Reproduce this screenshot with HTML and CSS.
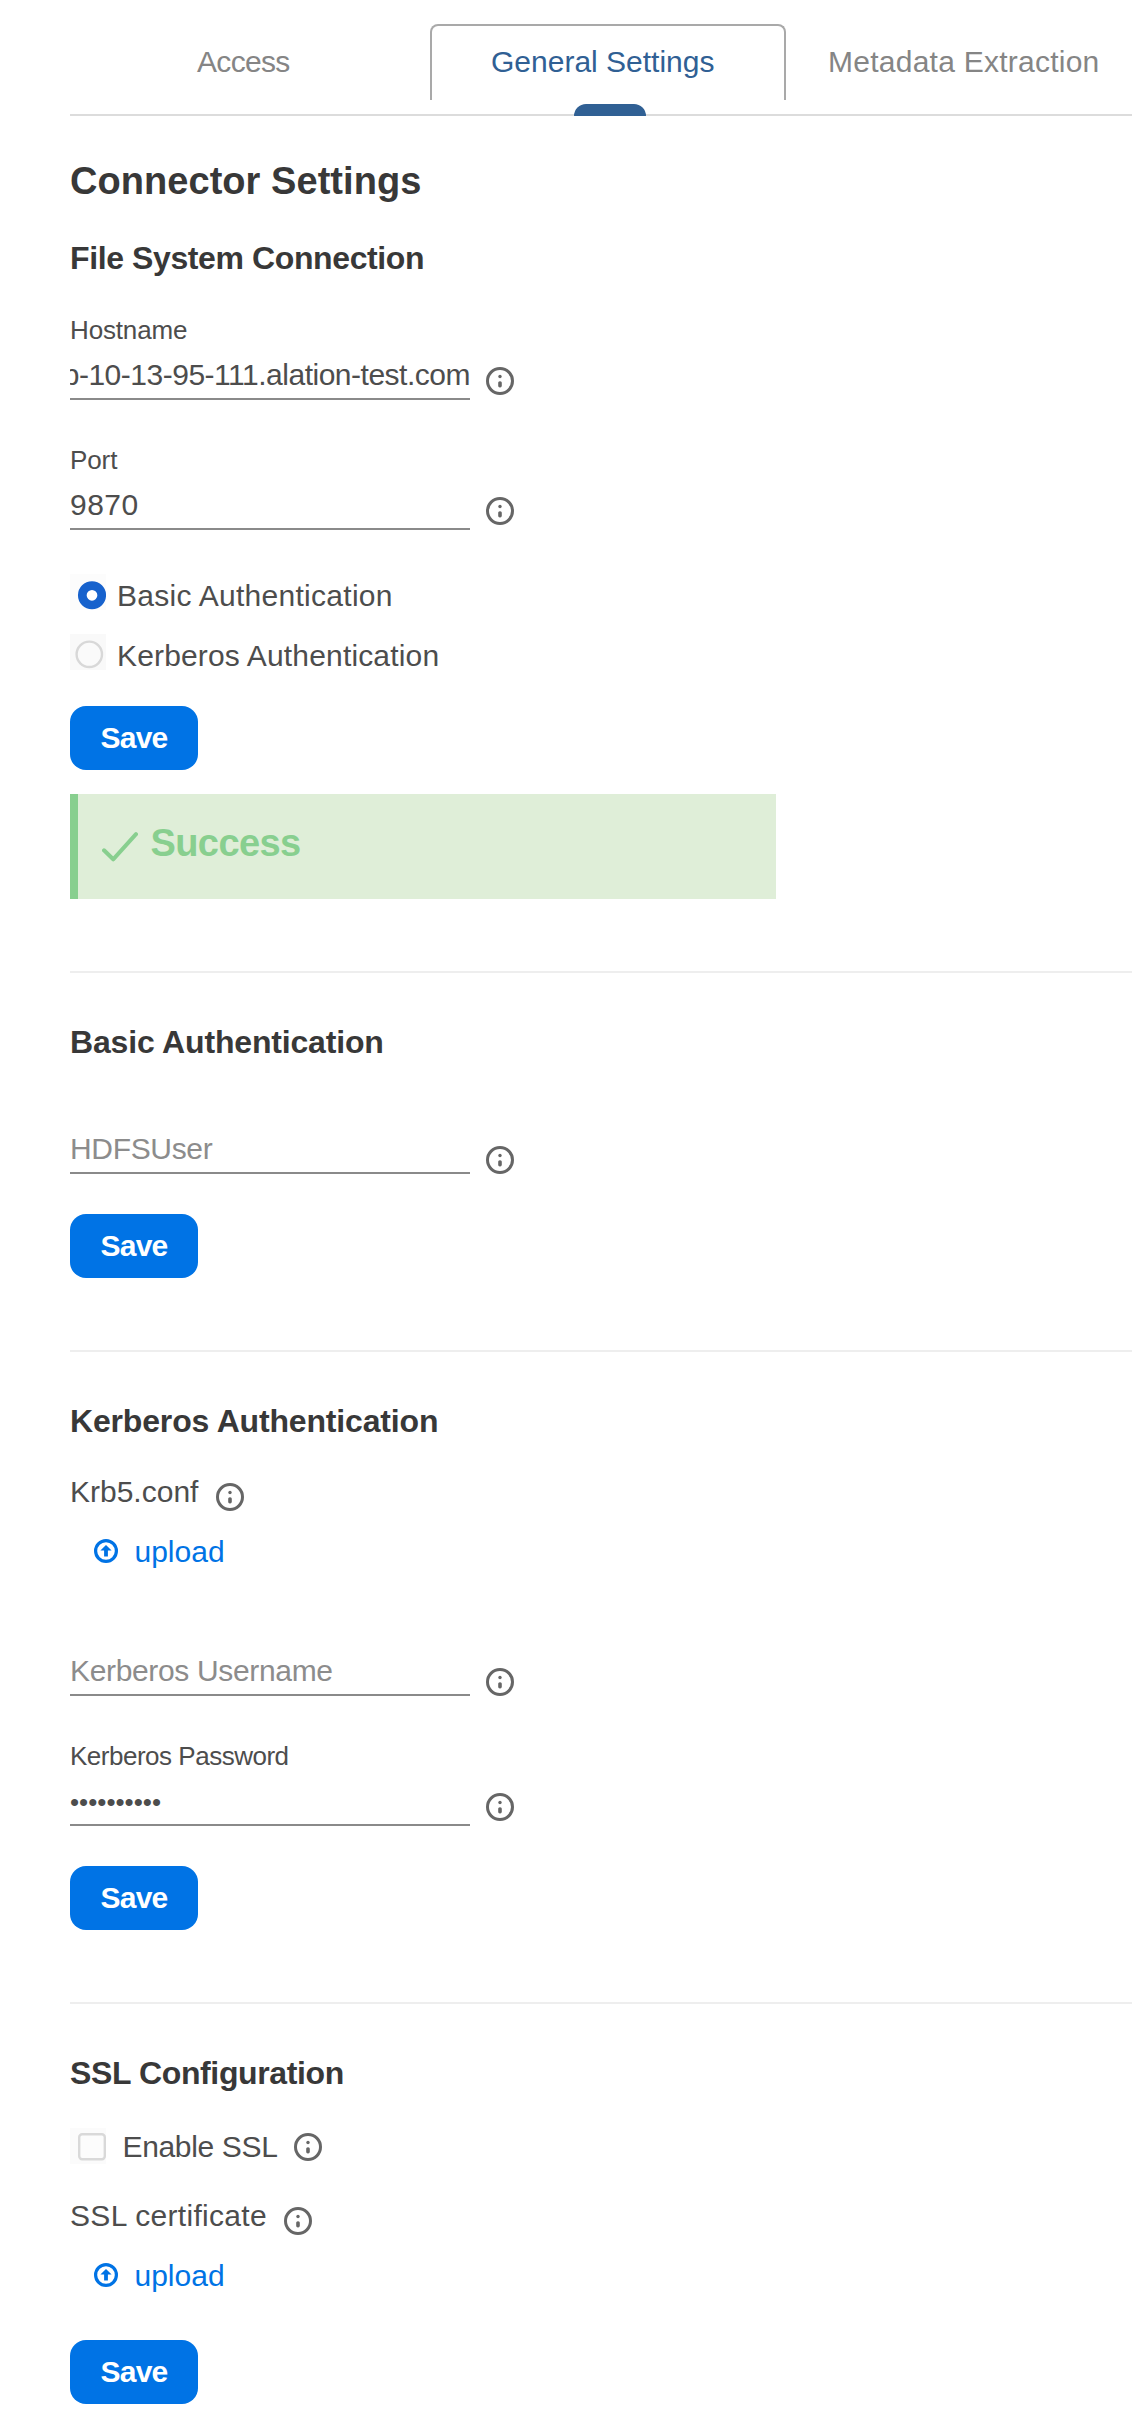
FILE: index.html
```html
<!DOCTYPE html>
<html lang="en">
<head>
<meta charset="utf-8">
<title>General Settings</title>
<link rel="stylesheet" href="styles.css">
</head>
<body>
<svg class="sprite" aria-hidden="true">
  <symbol id="info" viewBox="0 0 28 28">
    <circle cx="14" cy="14" r="12.5" fill="none" stroke="#666" stroke-width="3"/>
    <circle cx="14" cy="9.5" r="1.7" fill="#666"/>
    <rect x="12.2" y="14.2" width="3.6" height="6.2" rx="1.6" fill="#666"/>
  </symbol>
  <symbol id="upload" viewBox="0 0 24 24">
    <circle cx="12" cy="12" r="10.4" fill="none" stroke="#0073e5" stroke-width="3.2"/>
    <path d="M12 6l5.600 5.600h-3.700v6h-3.800v-6H6.400z" fill="#0073e5"/>
  </symbol>
</svg>

<nav class="tabs">
  <a class="tab tab-access">Access</a>
  <a class="tab tab-active">General Settings</a>
  <a class="tab tab-meta">Metadata Extraction</a>
</nav>

<main class="content">
  <h1 class="title">Connector Settings</h1>

  <section class="group">
    <h2 class="heading heading-files">File System Connection</h2>
    <div class="label label-host">Hostname</div>
    <div class="field">
      <div class="input input-host"><span>p-10-13-95-111.alation-test.com</span></div>
      <svg class="icon icon-raised"><use href="#info"/></svg>
    </div>
    <div class="label label-port">Port</div>
    <div class="field">
      <div class="input input-port">9870</div>
      <svg class="icon icon-raised"><use href="#info"/></svg>
    </div>
    <div class="radios">
      <label class="radio">
        <svg class="mark" viewBox="0 0 36 36"><rect width="36" height="36" fill="#fcfcfc"/><circle cx="22" cy="21.300" r="9.700" fill="#fff" stroke="#1762cd" stroke-width="8.700"/></svg>
        <span class="radio-basic">Basic Authentication</span>
      </label>
      <label class="radio">
        <svg class="mark" viewBox="0 0 36 36"><rect width="36" height="36" fill="#f9f9f9"/><circle cx="19.300" cy="20.300" r="12.700" fill="#fafafa" stroke="#d8d8d8" stroke-width="2.400"/></svg>
        <span class="radio-kerberos">Kerberos Authentication</span>
      </label>
    </div>
    <button class="save">Save</button>
    <div class="alert">
      <svg class="check" viewBox="0 0 36 30"><path d="M2 18.300l9.200 9L34 2.200" fill="none" stroke="#88cf8f" stroke-width="4" stroke-linecap="round" stroke-linejoin="round"/></svg>
      <span>Success</span>
    </div>
  </section>

  <section class="group divided">
    <h2 class="heading">Basic Authentication</h2>
    <div class="field field-user">
      <div class="input placeholder">HDFSUser</div>
      <svg class="icon"><use href="#info"/></svg>
    </div>
    <button class="save save-far">Save</button>
  </section>

  <section class="group divided">
    <h2 class="heading">Kerberos Authentication</h2>
    <div class="file file-krb">
      <span>Krb5.conf</span>
      <svg class="icon"><use href="#info"/></svg>
    </div>
    <a class="upload"><svg class="upload-icon"><use href="#upload"/></svg><span>upload</span></a>
    <div class="field field-kerberos">
      <div class="input placeholder">Kerberos Username</div>
      <svg class="icon"><use href="#info"/></svg>
    </div>
    <div class="label label-password">Kerberos Password</div>
    <div class="field">
      <div class="input password">••••••••••</div>
      <svg class="icon icon-raised"><use href="#info"/></svg>
    </div>
    <button class="save save-far">Save</button>
  </section>

  <section class="group divided">
    <h2 class="heading heading-ssl">SSL Configuration</h2>
    <label class="checkbox">
      <svg class="mark" viewBox="0 0 36 36"><rect width="36" height="36" fill="#fbfbfb"/><rect x="9.200" y="6.200" width="25.600" height="25" rx="3" fill="#fcfcfc" stroke="#d9d9d9" stroke-width="2.400"/></svg>
      <span>Enable SSL</span>
      <svg class="icon"><use href="#info"/></svg>
    </label>
    <div class="file file-ssl">
      <span>SSL certificate</span>
      <svg class="icon"><use href="#info"/></svg>
    </div>
    <a class="upload"><svg class="upload-icon"><use href="#upload"/></svg><span>upload</span></a>
    <button class="save save-ssl">Save</button>
  </section>
</main>
</body>
</html>
```
FILE: styles.css
```css
* { box-sizing: border-box; }

body {
  margin: 0;
  background: #fff;
  color: #4d4d4d;
  font: 30px/33px "Liberation Sans", Arial, sans-serif;
}

.sprite { display: none; }

/* Tabs */
.tabs {
  display: flex;
  height: 116px;
  margin-left: 70px;
  padding-top: 24px;
  border-bottom: 2px solid #dcdcdc;
  color: #858585;
}
.tab { height: 76px; padding-top: 21px; white-space: nowrap; }
.tab-access { width: 360px; padding-left: 127px; letter-spacing: -0.68px; }
.tab-active {
  position: relative;
  width: 356px;
  padding: 19px 0 0 59px;
  border: 2px solid #a9a9a9;
  border-bottom: 0;
  border-radius: 8px 8px 0 0;
  color: #306094;
}
.tab-active::after {
  content: "";
  position: absolute;
  left: 142px;
  top: 78px;
  width: 72px;
  height: 12px;
  border-radius: 12px 12px 0 0;
  background: #306094;
}
.tab-meta { padding-left: 42px; letter-spacing: 0.25px; }

/* Sections */
.content { margin-left: 70px; }
.group { display: flex; flex-direction: column; align-items: flex-start; }
.divided { margin-top: 72px; padding-top: 51px; border-top: 2px solid #eee; }

.title { margin: 44px 0 0; color: #383838; font-size: 38px; line-height: 42px; letter-spacing: 0.05px; }
.heading { margin: 0; color: #383838; font-size: 32px; line-height: 36px; letter-spacing: -0.17px; }
.heading-files { margin-top: 38px; letter-spacing: -0.39px; }
.heading-ssl { letter-spacing: -0.38px; }

/* Fields */
.label { font-size: 26px; line-height: 30px; }
.label-host { margin-top: 39px; letter-spacing: -0.15px; }
.label-port { margin-top: 45px; letter-spacing: -0.1px; }
.label-password { margin-top: 45px; letter-spacing: -0.49px; }

.field { display: flex; align-items: flex-end; gap: 16px; }
.field-user { margin-top: 59px; }
.field-kerberos { margin-top: 73px; }

.input {
  width: 400px;
  height: 55px;
  padding: 13px 0 7px;
  border-bottom: 2px solid #8a8a8a;
  white-space: nowrap;
}
.input-host { display: flex; justify-content: flex-end; overflow: hidden; letter-spacing: -0.49px; }
.input-port { letter-spacing: 0.5px; }
.placeholder { color: #8c8c8c; letter-spacing: -0.34px; }
.password { padding-top: 15px; font-size: 26px; }

.icon { display: block; flex: none; width: 28px; height: 28px; }
.icon-raised { margin-bottom: 5px; }

/* Radio buttons and checkbox */
.mark { display: block; flex: none; width: 36px; height: 36px; }
.radios { display: flex; flex-direction: column; gap: 24px; margin-top: 44px; }
.radio { display: flex; gap: 11px; height: 36px; line-height: 43px; }
.radio-basic { letter-spacing: 0.28px; }
.radio-kerberos { letter-spacing: 0.16px; }
.checkbox {
  display: flex;
  gap: 16.5px;
  height: 36px;
  margin-top: 37px;
  line-height: 37px;
  letter-spacing: -0.34px;
}
.checkbox .icon { margin-top: 4.5px; }

/* Buttons */
.save {
  width: 128px;
  height: 64px;
  margin: 36px 0 0;
  padding: 15px 0 16px;
  border: 0;
  border-radius: 16px;
  background: #0073e5;
  color: #fff;
  font: bold 30px/33px "Liberation Sans", Arial, sans-serif;
  letter-spacing: -0.8px;
}
.save-far { margin-top: 40px; }
.save-ssl { margin-top: 48px; }

/* Status message */
.alert {
  display: flex;
  gap: 12.5px;
  width: 706px;
  height: 105px;
  margin-top: 24px;
  padding: 28px 0 0 24px;
  border-left: 8px solid #88cf8f;
  background: #dfeed8;
  color: #88cf8f;
  font-size: 38px;
  font-weight: bold;
  line-height: 42px;
  letter-spacing: -0.6px;
}
.check { width: 36px; height: 30px; margin-top: 9.5px; }

/* File uploads */
.file { display: flex; gap: 17.5px; height: 33px; }
.file .icon { margin-top: 7.5px; }
.file-krb { margin-top: 36px; }
.file-ssl { margin-top: 35px; letter-spacing: 0.31px; }
.upload { display: flex; gap: 16.5px; height: 33px; margin: 27px 0 0 24px; color: #0073e5; }
.upload-icon { width: 24px; height: 24px; margin-top: 4.3px; }
```
